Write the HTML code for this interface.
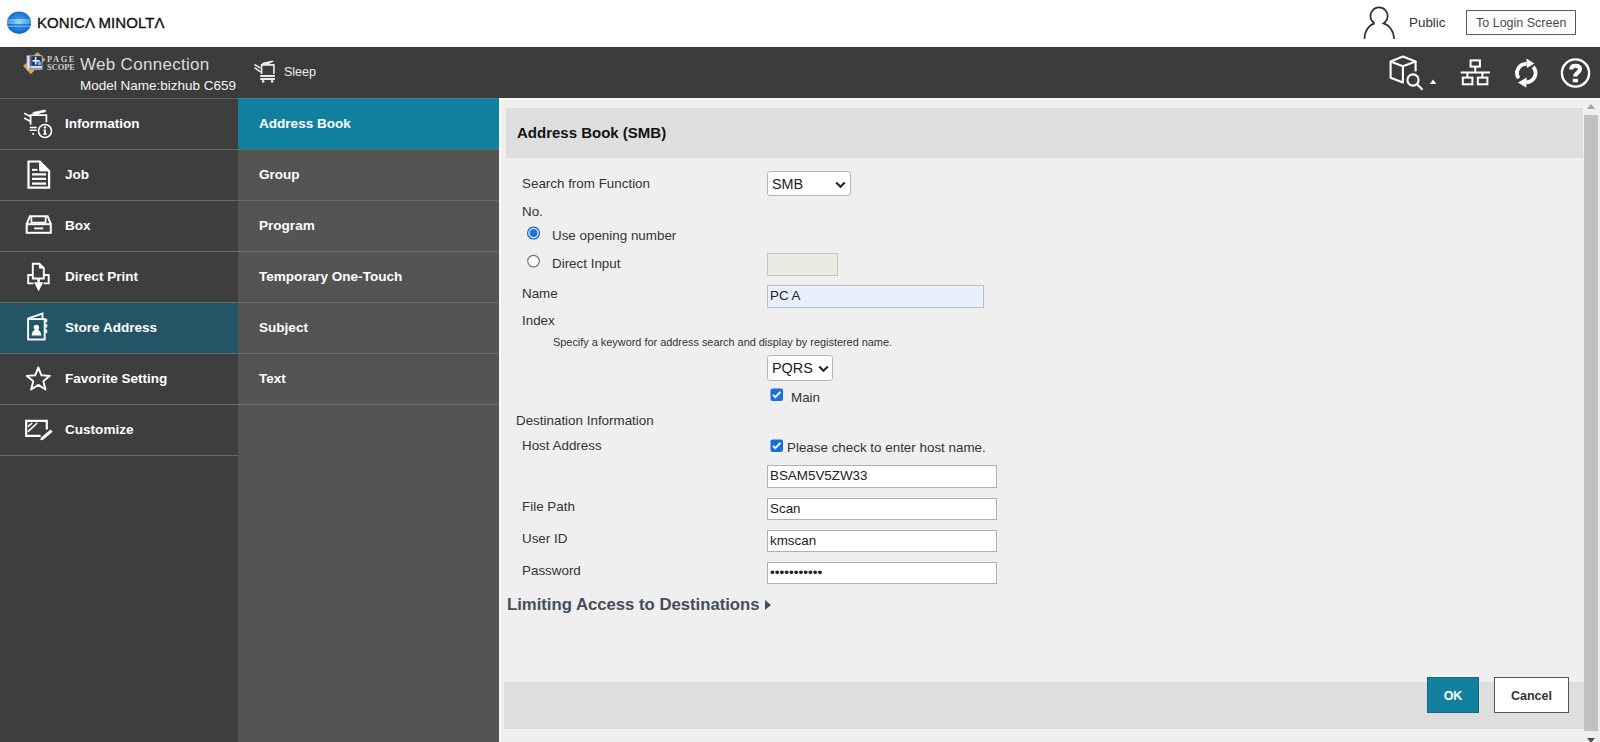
<!DOCTYPE html>
<html><head><meta charset="utf-8">
<style>
*{margin:0;padding:0;box-sizing:border-box}
html,body{width:1600px;height:742px;overflow:hidden;background:#efefef;font-family:"Liberation Sans",sans-serif}
.a{position:absolute}
#top{left:0;top:0;width:1600px;height:47px;background:#fff}
#hdr{left:0;top:47px;width:1600px;height:51px;background:#3c3c3c}
#hline{left:0;top:98px;width:238px;height:1px;background:#5e5e5e}
#hline2{left:238px;top:98px;width:261px;height:1px;background:#3a7f98}
#side{left:0;top:99px;width:238px;height:643px;background:#3e3e3e}
#sub{left:238px;top:99px;width:261px;height:643px;background:#545454}
#content{left:499px;top:98px;width:1101px;height:644px;background:#efefef}
.row{position:absolute;left:0;width:238px;height:51px;border-bottom:1px solid #6a6a6a}
.row span{position:absolute;left:65px;top:16.6px;color:#fff;font-weight:bold;font-size:13.55px;line-height:16px}
.row svg{position:absolute;left:22px;top:9px}
.srow{position:absolute;left:0;width:261px;height:51px;border-bottom:1px solid #6a6a6a}
.srow span{position:absolute;left:21px;top:16.6px;color:#fff;font-weight:bold;font-size:13.55px;line-height:16px}
.lbl{position:absolute;font-size:13.4px;color:#333;line-height:16px;white-space:nowrap}
.inp{position:absolute;background:#fff;border:1px solid #b0b0b0;font-size:13.4px;color:#222;line-height:19px;padding-left:2px;white-space:nowrap}
</style></head><body>
<div class="a" id="top">
  <svg class="a" style="left:6px;top:10px" width="26" height="26" viewBox="0 0 26 26">
    <defs>
      <radialGradient id="g1" cx="0.5" cy="0.45" r="0.6"><stop offset="0" stop-color="#4aa0ec"/><stop offset="0.7" stop-color="#1f74d4"/><stop offset="1" stop-color="#0f58b8"/></radialGradient>
      <linearGradient id="g2" x1="0" x2="1" y1="0" y2="0"><stop offset="0" stop-color="#3d9ae8"/><stop offset="0.5" stop-color="#a6dcf8"/><stop offset="1" stop-color="#3d9ae8"/></linearGradient>
      <clipPath id="cp"><ellipse cx="13.05" cy="12.7" rx="12" ry="11.2"/></clipPath>
    </defs>
    <ellipse cx="13.05" cy="12.7" rx="12" ry="11.2" fill="url(#g1)"/>
    <g clip-path="url(#cp)">
      <rect x="0" y="9" width="26" height="5.2" fill="url(#g2)" opacity="0.85"/>
      <rect x="0" y="14.6" width="26" height="0.6" fill="#1a62c0"/>
      <rect x="0" y="15.5" width="26" height="1.5" fill="#5cb4f2" opacity="0.9"/>
    </g>
  </svg>
  <div class="a" style="left:37px;top:13.5px;font-size:15px;letter-spacing:0.08px;color:#111;line-height:18px;-webkit-text-stroke:0.35px #111">KONIC&#923; MINOLT&#923;</div>
  <svg class="a" style="left:1362px;top:5px" width="34" height="36" viewBox="0 0 34 36">
    <path d="M12.6 18.4 A8.6 8.6 0 1 1 21.5 18.4 C27 20 32 26 32 34 M12.6 18.4 C7 20 2.5 26 2.5 34" fill="none" stroke="#333" stroke-width="1.7"/>
  </svg>
  <div class="a" style="left:1409px;top:15px;font-size:13.4px;color:#333;line-height:16px">Public</div>
  <div class="a" style="left:1466px;top:10px;width:110px;height:25px;border:1px solid #5a5a5a;background:#fff"></div>
  <div class="a" style="left:1476px;top:14.6px;font-size:12.5px;color:#4a4a4a;line-height:16px">To Login Screen</div>
</div>
<div class="a" id="hdr">
  <svg class="a" style="left:20px;top:2px" width="56" height="28" viewBox="0 0 56 28">
    <path d="M17.6 3 L25.6 10.8 L21.2 14.6 L13.6 6.6 Z" fill="#e0a640"/>
    <path d="M3 16.8 L7.2 13.4 L14.6 21.4 L10.6 25.2 Z" fill="#e2a844"/>
    <rect x="6.6" y="6.4" width="15.8" height="14.6" fill="#aeb8cc"/>
    <rect x="7.6" y="6.8" width="1.6" height="13" fill="#e8eef8"/>
    <rect x="9.8" y="6.8" width="1.3" height="13" fill="#5a6a88"/>
    <rect x="11.3" y="7.2" width="10.4" height="9.6" fill="#18335e"/>
    <path d="M14.8 8 H16.6 V11 H19.8 V12.8 H16.6 V15.6 H14.8 V12.8 H12.4 V11 H14.8 Z" fill="#d8eef8"/>
    <path d="M17.5 13.2 L21 12.6 L21.4 15.8 L18 16.2 Z" fill="#7ab0e0"/>
    <rect x="9.6" y="17.4" width="12.6" height="1.2" fill="#f0f4fa"/>
    <rect x="9.6" y="19.2" width="12.6" height="1.4" fill="#8090a8"/>
  </svg>
  <div class="a" style="left:47px;top:8.5px;font-family:'Liberation Serif',serif;font-weight:bold;font-size:8.4px;line-height:8px;color:#cfcfcf;letter-spacing:1.6px">PAGE</div>
  <div class="a" style="left:47px;top:16.5px;font-family:'Liberation Serif',serif;font-weight:bold;font-size:8.4px;line-height:8px;color:#cfcfcf;letter-spacing:0px">SCOPE</div>
    <div class="a" style="left:80px;top:8px;font-size:17px;color:#dcdcdc;line-height:20px;letter-spacing:0.3px">Web Connection</div>
  <div class="a" style="left:80px;top:30.5px;font-size:13.5px;color:#f4f4f4;line-height:16px">Model Name:bizhub C659</div>
  <div class="a" style="left:284px;top:17px;font-size:12.5px;color:#eee;line-height:16px">Sleep</div>
</div>
<div class="a" id="hline"></div><div class="a" id="hline2"></div>
<div class="a" id="side">
  <div class="row" style="top:0"><span>Information</span></div>
  <div class="row" style="top:51px"><span>Job</span></div>
  <div class="row" style="top:102px"><span>Box</span></div>
  <div class="row" style="top:153px"><span>Direct Print</span></div>
  <div class="row" style="top:204px;background:#245566"><span>Store Address</span></div>
  <div class="row" style="top:255px"><span>Favorite Setting</span></div>
  <div class="row" style="top:306px"><span>Customize</span></div>
</div>
<div class="a" id="sub">
  <div class="srow" style="top:0;background:#11809f"><span>Address Book</span></div>
  <div class="srow" style="top:51px"><span>Group</span></div>
  <div class="srow" style="top:102px"><span>Program</span></div>
  <div class="srow" style="top:153px"><span>Temporary One-Touch</span></div>
  <div class="srow" style="top:204px"><span>Subject</span></div>
  <div class="srow" style="top:255px"><span>Text</span></div>
</div>
<div class="a" id="content">
  <div class="a" style="left:0;top:0;width:1.5px;height:644px;background:#f8f8f8"></div>
  <div class="a" style="left:0;top:0;width:1101px;height:1.5px;background:#f6f6f6"></div>
  <div class="a" style="left:7px;top:10px;width:1077px;height:50px;background:#dedede"></div>
  <div class="a" style="left:18px;top:26px;font-size:15px;font-weight:bold;color:#111;line-height:18px">Address Book (SMB)</div>
  <div class="lbl" style="left:23px;top:78px">Search from Function</div>
  <div class="a" style="left:268px;top:73px;width:84px;height:25px;background:#fff;border:1px solid #b6b6b6;border-radius:3px"></div>
  <div class="a" style="left:273px;top:77.5px;font-size:14.4px;color:#222;line-height:17px">SMB</div>
  <svg class="a" style="left:336px;top:82.5px" width="11" height="8" viewBox="0 0 11 8"><path d="M1.2 1.5 L5.5 5.8 L9.8 1.5" fill="none" stroke="#222" stroke-width="2"/></svg>
  <div class="lbl" style="left:23px;top:106px">No.</div>
  <div class="lbl" style="left:53px;top:130px">Use opening number</div>
  <div class="lbl" style="left:53px;top:158px">Direct Input</div>
  <div class="a" style="left:268px;top:155px;width:71px;height:23px;background:#ebebe4;border:1px solid #c3c3c0"></div>
  <div class="lbl" style="left:23px;top:188px">Name</div>
  <div class="inp" style="left:268px;top:187px;width:217px;height:23px;background:#e8f0fe;border-color:#b9c0c8">PC A</div>
  <div class="lbl" style="left:23px;top:215px">Index</div>
  <div class="lbl" style="left:54px;top:238px;font-size:10.9px;line-height:13px">Specify a keyword for address search and display by registered name.</div>
  <div class="a" style="left:268px;top:257px;width:66px;height:26px;background:#fff;border:1px solid #b6b6b6;border-radius:3px"></div>
  <div class="a" style="left:273px;top:261.5px;font-size:14.4px;color:#222;line-height:17px">PQRS</div>
  <svg class="a" style="left:318.5px;top:266.5px" width="11" height="8" viewBox="0 0 11 8"><path d="M1.2 1.5 L5.5 5.8 L9.8 1.5" fill="none" stroke="#222" stroke-width="2"/></svg>
  <div class="lbl" style="left:292px;top:292px">Main</div>
  <div class="lbl" style="left:17px;top:315px">Destination Information</div>
  <div class="lbl" style="left:23px;top:340px">Host Address</div>
  <div class="lbl" style="left:288px;top:342px">Please check to enter host name.</div>
  <div class="inp" style="left:268px;top:367px;width:230px;height:23px">BSAM5V5ZW33</div>
  <div class="lbl" style="left:23px;top:401px">File Path</div>
  <div class="inp" style="left:268px;top:400px;width:230px;height:22px">Scan</div>
  <div class="lbl" style="left:23px;top:433px">User ID</div>
  <div class="inp" style="left:268px;top:432px;width:230px;height:22px">kmscan</div>
  <div class="lbl" style="left:23px;top:465px">Password</div>
  <div class="inp" style="left:268px;top:464px;width:230px;height:22px;font-size:13.6px;letter-spacing:0px">&#8226;&#8226;&#8226;&#8226;&#8226;&#8226;&#8226;&#8226;&#8226;&#8226;&#8226;</div>
  <div class="a" style="left:8px;top:497px;font-size:16.7px;font-weight:bold;color:#434e5a;line-height:20px">Limiting Access to Destinations</div>
  <svg class="a" style="left:264.5px;top:501px" width="8" height="12" viewBox="0 0 8 12"><path d="M1 1 L7 6 L1 11 Z" fill="#434e5a"/></svg>
  <div class="a" style="left:5px;top:584px;width:1080px;height:47px;background:#dedede"></div>
  <div class="a" style="left:928px;top:579px;width:52px;height:36px;background:#13809f;border:1px solid #17647a"></div>
  <div class="a" style="left:928px;top:589.5px;width:52px;text-align:center;font-size:12.5px;font-weight:bold;color:#fff;line-height:16px">OK</div>
  <div class="a" style="left:995px;top:579px;width:75px;height:36px;background:#fff;border:1px solid #555"></div>
  <div class="a" style="left:995px;top:589.5px;width:75px;text-align:center;font-size:12.5px;font-weight:bold;color:#333;line-height:16px">Cancel</div>
  <div class="a" style="left:1085px;top:17px;width:14px;height:616px;background:#c1c1c1"></div>
  <svg class="a" style="left:1088px;top:6px" width="8" height="5" viewBox="0 0 8 5"><path d="M0 5 L4 0 L8 5 Z" fill="#a3a3a3"/></svg>
  <svg class="a" style="left:1088px;top:640px" width="8" height="5" viewBox="0 0 8 5"><path d="M0 0 L4 5 L8 0 Z" fill="#505050"/></svg>
</div>

<!-- sidebar icons -->
<svg class="a" style="left:20px;top:105px" width="36" height="36" viewBox="0 0 36 36" fill="none" stroke="#fff">
  <path d="M4.2 8.3 L10.5 11.4 M4.2 12.9 L10.5 16.6" stroke-width="1.7"/>
  <path d="M10.6 19.8 V10.2 H26.4 V17.2" stroke-width="1.7"/>
  <path d="M12.8 9.2 L13.2 7.4 L25.2 5 L25.6 6.6 L19 8.2 L18.6 9.2 Z" fill="#fff" stroke-width="0.8"/>
  <path d="M9.8 22.6 H16.6 M9.8 25.3 H16.6" stroke-width="1.5"/>
  <circle cx="13.2" cy="29" r="1.1" fill="#fff" stroke="none"/>
  <circle cx="25" cy="26" r="6.5" stroke-width="1.6"/>
  <circle cx="25" cy="22.4" r="1.2" fill="#fff" stroke="none"/>
  <path d="M23.3 24.6 H25.9 V28.6 H26.9 V29.8 H23.1 V28.6 H24.1 V25.8 H23.3 Z" fill="#fff" stroke="none"/>
</svg>
<svg class="a" style="left:22px;top:156px" width="34" height="38" viewBox="0 0 34 38" fill="none" stroke="#fff">
  <path d="M6.5 5.5 H17.7 L27.1 14.9 V31.7 H6.5 Z" stroke-width="2.2"/>
  <path d="M17.7 5.5 V14.9 H27.1 Z" fill="#fff" stroke-width="1"/>
  <path d="M10 13.85 H15.4" stroke-width="2"/>
  <path d="M10 18.45 H24.1 M10 22.95 H24.1 M10 27.55 H24.1" stroke-width="2.2"/>
</svg>
<svg class="a" style="left:22px;top:210px" width="34" height="30" viewBox="0 0 34 30" fill="none" stroke="#fff">
  <path d="M4.7 14.2 L7.9 6.2 H25.6 L28.8 14.2" stroke-width="2"/>
  <path d="M9.4 6.2 V12.6 H23.6 V6.2" stroke-width="1.7"/>
  <rect x="4.7" y="14.2" width="24.1" height="8.6" stroke-width="2"/>
  <path d="M12.2 18.4 H21.3" stroke-width="1.9"/>
</svg>
<svg class="a" style="left:22px;top:258px" width="34" height="38" viewBox="0 0 34 38" fill="none" stroke="#fff">
  <path d="M10.8 20.5 V5.7 H17.4 L21.8 10.1 V20.5 Z" stroke-width="1.9" stroke-linejoin="miter"/>
  <path d="M17.4 5.7 V10.1 H21.8 Z" fill="#fff" stroke-width="1"/>
  <path d="M10.8 17 H6.2 V25.4 H11.5 M21.7 25.4 H26.7 V17 H21.8" stroke-width="1.9"/>
  <path d="M16.6 20.5 V24.5" stroke-width="2.6"/>
  <path d="M12 24.2 H21.2 L16.6 33.6 Z" fill="#fff" stroke="none"/>
</svg>
<svg class="a" style="left:22px;top:306px" width="34" height="40" viewBox="0 0 34 40" fill="none" stroke="#fff">
  <rect x="6.1" y="13.1" width="16.6" height="20.4" stroke-width="1.9"/>
  <path d="M5.6 12.6 L20.5 7.6 V13.1" stroke-width="1.8"/>
  <path d="M24.3 12.8 V16.2 M24.3 18 V21.5 M24.3 23.6 V27" stroke-width="1.8"/>
  <circle cx="14.4" cy="21.4" r="2.7" fill="#fff" stroke="none"/>
  <path d="M9.7 29.6 C9.9 25.6 11.8 23.8 14.4 23.8 C17 23.8 19 25.6 19.3 29.6 Z" fill="#fff" stroke="none"/>
</svg>
<svg class="a" style="left:22px;top:362px" width="34" height="34" viewBox="0 0 34 34" fill="none" stroke="#fff">
  <path d="M16.30 5.40 L19.42 13.31 L27.90 13.83 L21.34 19.24 L23.47 27.47 L16.30 22.90 L9.13 27.47 L11.26 19.24 L4.70 13.83 L13.18 13.31 Z" stroke-width="1.9" stroke-linejoin="round"/>
</svg>
<svg class="a" style="left:22px;top:416px" width="34" height="30" viewBox="0 0 34 30" fill="none" stroke="#fff">
  <path d="M18.6 19.9 H4.2 V4.9 H24.8 V13.4" stroke-width="2.2"/>
  <path d="M6 10.7 L10.2 7 M6 15.7 L15.2 7" stroke-width="1.6"/>
  <path d="M18.2 24.2 L19.1 21.4 L28.6 13.4 L30.6 15.8 L21.1 23.8 Z" fill="#fff" stroke="none"/>
</svg>
<!-- form controls -->
<svg class="a" style="left:526px;top:226px" width="15" height="15" viewBox="0 0 15 15">
  <circle cx="7.5" cy="7" r="5.9" fill="#e8f4ff" stroke="#1766cf" stroke-width="1.3"/>
  <circle cx="7.5" cy="7" r="3.9" fill="#1a73e8"/>
</svg>
<svg class="a" style="left:526px;top:254px" width="15" height="15" viewBox="0 0 15 15">
  <circle cx="7.5" cy="7.1" r="5.8" fill="#fff" stroke="#767676" stroke-width="1.2"/>
</svg>
<svg class="a" style="left:770px;top:388px" width="14" height="14" viewBox="0 0 14 14">
  <rect x="0.5" y="0.5" width="12.5" height="12.5" rx="2" fill="#1a6fd8"/>
  <path d="M3 6.8 L5.4 9.2 L10.4 3.9" fill="none" stroke="#fff" stroke-width="1.9"/>
</svg>
<svg class="a" style="left:770px;top:439px" width="14" height="14" viewBox="0 0 14 14">
  <rect x="0.5" y="0.5" width="12.5" height="12.5" rx="2" fill="#1a6fd8"/>
  <path d="M3 6.8 L5.4 9.2 L10.4 3.9" fill="none" stroke="#fff" stroke-width="1.9"/>
</svg>
<!-- header icons -->
<svg class="a" style="left:1380px;top:50px" width="60" height="45" viewBox="0 0 60 45" fill="none" stroke="#fff" stroke-width="2.1" stroke-linejoin="round">
  <path d="M10.6 11.4 L22.9 6.6 L35.6 11.6 L22.9 16.2 Z"/>
  <path d="M10.6 11.4 V27.8 L22.9 32.4 V16.2"/>
  <path d="M35.6 11.6 V21.4"/>
  <circle cx="33" cy="30" r="5.6" fill="#3c3c3c"/>
  <path d="M37 34.2 L42.6 39.8"/>
  <path d="M49.9 34.1 L53.1 29.6 L56.3 34.1 Z" fill="#fff" stroke="none"/>
</svg>
<svg class="a" style="left:1455px;top:55px" width="40" height="35" viewBox="0 0 40 35" fill="none" stroke="#fff" stroke-width="2">
  <rect x="15.6" y="5.4" width="9.3" height="6.2"/>
  <path d="M20.25 11.6 V17.5 M5.6 17.5 H34.9 M12.4 17.5 V22.6 M27.4 17.5 V22.6"/>
  <rect x="7.8" y="22.6" width="9.6" height="6.7"/>
  <rect x="22.8" y="22.6" width="9.6" height="6.7"/>
</svg>
<svg class="a" style="left:1510px;top:55px" width="34" height="36" viewBox="0 0 34 36" fill="none" stroke="#fff">
  <path d="M8.63 23.27 A9.25 9.25 0 0 1 16.62 8.86" stroke-width="3.8"/>
  <path d="M23.12 11.85 A9.25 9.25 0 0 1 16.3 27.35" stroke-width="3.8"/>
  <path d="M16.4 3.6 L24.4 8.4 L16.9 12.9 Z" fill="#fff" stroke="none"/>
  <path d="M16.7 22.6 L8 27.4 L16.3 32.6 Z" fill="#fff" stroke="none"/>
</svg>
<svg class="a" style="left:1558px;top:56px" width="36" height="36" viewBox="0 0 36 36" fill="none" stroke="#fff">
  <circle cx="17.5" cy="17" r="13.6" stroke-width="2.4"/>
  <path d="M13.2 13.6 C13.2 11 15 9.8 17.6 9.8 C20.4 9.8 22 11.3 22 13.3 C22 16.3 17.2 16.6 17.2 20.6" stroke-width="4"/>
  <rect x="14.8" y="22.8" width="5.1" height="3.5" fill="#fff" stroke="none"/>
</svg>
<svg class="a" style="left:250px;top:58px" width="30" height="28" viewBox="0 0 30 28" fill="none" stroke="#eaeaea">
  <path d="M4.5 6.5 L10.6 10.1 M4.5 9.7 L10.9 14.2" stroke-width="1.5"/>
  <path d="M11.6 16 V6.9 H23.9 V16" stroke-width="1.6"/>
  <path d="M11.4 7.2 L12.6 4.8 L22.4 2.6 L23.8 3.5 L19.6 5.4 L19.4 7.2 Z" fill="#eaeaea" stroke="none"/>
  <path d="M10.2 18 H24.9 M10.2 21 H24.9" stroke-width="2"/>
  <circle cx="13.2" cy="23.4" r="1.3" fill="#eaeaea" stroke="none"/>
  <circle cx="22.1" cy="23.4" r="1.3" fill="#eaeaea" stroke="none"/>
</svg>
</body></html>
